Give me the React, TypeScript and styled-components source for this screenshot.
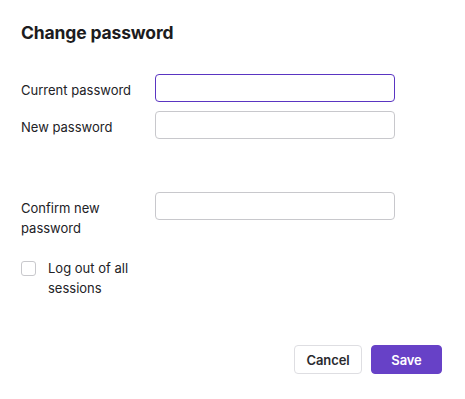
import React from "react";
import styled, { createGlobalStyle } from "styled-components";

const GlobalStyle = createGlobalStyle`
  html, body { margin: 0; padding: 0; background: #ffffff; }
  body { font-family: Inter, "Noto Sans", sans-serif; color: #1f1f23; -webkit-font-smoothing: antialiased; }
  * { box-sizing: border-box; }
`;

const Dialog = styled.div`
  width: 465px;
  height: 399px;
  padding: 21px 23px 0 21px;
  display: flex;
  flex-direction: column;
`;

const Title = styled.h2`
  margin: 0;
  font-size: 17.5px;
  line-height: 24px;
  font-weight: 700;
  color: #1c1c20;
  letter-spacing: -0.15px;
`;

const Fields = styled.div`
  margin-top: 29px;
  display: flex;
  flex-direction: column;
`;

const Row = styled.div<{ $gap?: number }>`
  display: grid;
  grid-template-columns: 120px 240px;
  column-gap: 14px;
  align-items: start;
  margin-bottom: ${(p) => p.$gap ?? 9}px;
`;

const Label = styled.label`
  padding-top: 6px;
  font-size: 13px;
  line-height: 20px;
  color: #222226;
`;

const Input = styled.input<{ $focused?: boolean }>`
  width: 240px;
  height: 28px;
  border-radius: 4px;
  border: 1px solid ${(p) => (p.$focused ? "#5a35c2" : "#c8c8cc")};
  background: #fff;
  outline: none;
  font: inherit;
  font-size: 13px;
  padding: 0 8px;
`;

const CheckRow = styled.label`
  display: flex;
  align-items: flex-start;
  gap: 12px;
  width: 120px;
  font-size: 13px;
  line-height: 20px;
  color: #222226;
`;

const Box = styled.span`
  flex: none;
  width: 15px;
  height: 15px;
  margin-top: 3px;
  border: 1px solid #c8c8cc;
  border-radius: 3px;
  background: #fff;
`;

const Footer = styled.div`
  margin-top: auto;
  margin-bottom: 25px;
  display: flex;
  justify-content: flex-end;
  gap: 9px;
`;

const Button = styled.button<{ $primary?: boolean }>`
  height: 29px;
  min-width: ${(p) => (p.$primary ? 71 : 68)}px;
  padding: 0 10px;
  border-radius: 4px;
  font-family: inherit;
  font-size: 13px;
  font-weight: 600;
  letter-spacing: -0.1px;
  cursor: pointer;
  border: 1px solid ${(p) => (p.$primary ? "#6741c7" : "#dedee2")};
  background: ${(p) => (p.$primary ? "#6741c7" : "#ffffff")};
  color: ${(p) => (p.$primary ? "#ffffff" : "#2a2a2e")};
`;

export default function App() {
  return (
    <>
      <GlobalStyle />
      <Dialog>
        <Title>Change password</Title>
        <Fields>
          <Row>
            <Label>Current password</Label>
            <Input type="password" $focused />
          </Row>
          <Row $gap={53}>
            <Label>New password</Label>
            <Input type="password" />
          </Row>
          <Row $gap={20}>
            <Label>Confirm new password</Label>
            <Input type="password" />
          </Row>
          <CheckRow>
            <Box />
            <span>Log out of all sessions</span>
          </CheckRow>
        </Fields>
        <Footer>
          <Button>Cancel</Button>
          <Button $primary>Save</Button>
        </Footer>
      </Dialog>
    </>
  );
}
